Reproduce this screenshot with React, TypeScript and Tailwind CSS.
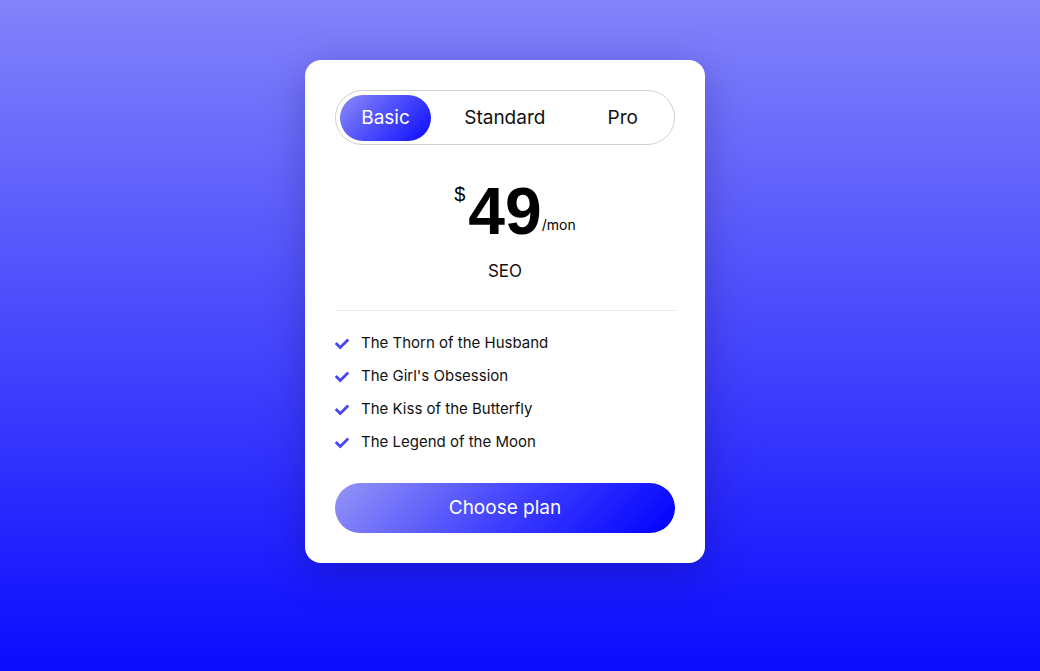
import { FaCheck } from "react-icons/fa";

const FEATURES = [
  "The Thorn of the Husband",
  "The Girl's Obsession",
  "The Kiss of the Butterfly",
  "The Legend of the Moon",
];

export default function App() {
  return (
    <div
      className="w-full h-[671px] flex items-start justify-center pt-[60px] pr-[30px] bg-[linear-gradient(to_bottom,#8383fb,#0b0bff)]"
      style={{ fontFamily: "Inter, 'Noto Sans', sans-serif" }}
    >
      <div className="w-[400px] bg-white rounded-2xl px-[30px] pt-[30px] pb-[30px] shadow-[0_10px_40px_rgba(0,0,60,0.25)]">
        {/* plan toggle */}
        <div className="h-[55px] border border-[#cfcfcf] rounded-full flex items-center justify-between pl-1 pr-4">
          <button className="h-[46px] w-[91px] pt-[2px] rounded-full text-white text-[19px] bg-[linear-gradient(135deg,#8c8cf8,#0a0aff)]">
            Basic
          </button>
          <button className="h-[46px] pt-[2px] px-[19px] mr-[9px] text-[19px] text-[#111]">Standard</button>
          <button className="h-[46px] pt-[2px] px-[20px] text-[19px] text-[#111]">Pro</button>
        </div>

        {/* price */}
        <div className="flex justify-center items-start mt-[33px] pl-[20px] text-black" style={{ fontFamily: "'Liberation Sans', Arial, sans-serif" }}>
          <span className="text-[20px] leading-none mt-[6px] mr-[3px]">$</span>
          <span className="text-[66px] font-bold leading-none">49</span>
          <span className="text-[14px] leading-none self-end mb-[12px]" style={{ fontFamily: "Inter, sans-serif" }}>/mon</span>
        </div>
        <div className="text-center text-[17px] text-[#111] mt-[15px]">SEO</div>

        <div className="h-px bg-[#e8e8e8] mt-[25px]" />

        <ul className="mt-[23px] flex flex-col gap-[13px]">
          {FEATURES.map((f) => (
            <li key={f} className="flex items-center h-[20px] text-[15px] text-[#111]">
              <FaCheck className="text-[#4747f5] w-[14px] h-[14px] mr-[12px]" />
              {f}
            </li>
          ))}
        </ul>

        <button className="mt-[30px] w-full h-[50px] pt-[2px] rounded-full text-white text-[19px] bg-[linear-gradient(135deg,#9595f6,#3a3aff_55%,#0000ff)]">
          Choose plan
        </button>
      </div>
    </div>
  );
}
